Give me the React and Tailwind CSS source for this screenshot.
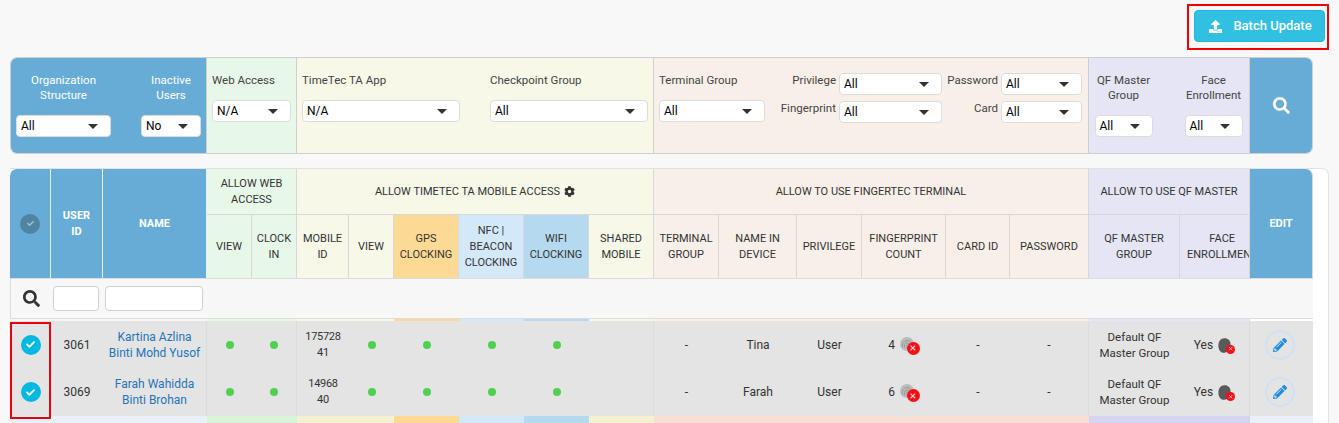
import React from "react";
import { FaSearch, FaCog, FaPencilAlt, FaUpload, FaCheck } from "react-icons/fa";

const GRID = "grid grid-cols-[41px_52px_104px_45px_45px_52px_45px_65px_65px_65px_65px_65px_78px_65px_84px_64px_79px_91px_70px_63px]";

function Select({ value, w, h = "h-[22px]" }) {
  return (
    <div className={`${w} ${h} flex items-center justify-between rounded-[4px] border border-[#dcdcdc] bg-white pl-[4px] pr-[12px] text-[12px] text-black shrink-0`}>
      <span>{value}</span>
      <span className="h-0 w-0 border-x-[5px] border-t-[5px] border-x-transparent border-t-[#333]" />
    </div>
  );
}

function LabelSelect({ label, value, w, gap = "mt-[12px]", lw = "" }) {
  return (
    <div className={`flex flex-col items-center ${w} ${lw}`}>
      <div className="h-[30px] whitespace-nowrap text-center leading-[15px]">{label}</div>
      <div className={gap}><Select value={value} w={w} /></div>
    </div>
  );
}

function Filters() {
  return (
    <div className="ml-[10px] flex h-[97px] w-[1303px] overflow-hidden rounded-[7px] border border-[#cfcfcf] text-[11.5px] text-[#444]">
      <div className="flex w-[196px] gap-[30px] border-r border-[#cfcfcf] bg-[#67acd6] pl-[5px] pt-[15px] text-white">
        <LabelSelect label={<>Organization<br />Structure</>} value="All" w="w-[95px]" />
        <LabelSelect label={<>Inactive<br />Users</>} value="No" w="w-[60px]" />
      </div>
      <div className="w-[90px] border-r border-[#cfcfcf] bg-[#e8f8e8] pl-[5px] pt-[15px]">
        <div className="h-[15px] leading-[15px]">Web Access</div>
        <div className="mt-[12px]"><Select value="N/A" w="w-[79px]" /></div>
      </div>
      <div className="flex w-[357px] gap-[30px] border-r border-[#cfcfcf] bg-[#f7f8e8] pl-[5px] pt-[15px]">
        <div>
          <div className="h-[15px] leading-[15px]">TimeTec TA App</div>
          <div className="mt-[12px]"><Select value="N/A" w="w-[158px]" /></div>
        </div>
        <div>
          <div className="h-[15px] leading-[15px]">Checkpoint Group</div>
          <div className="mt-[12px]"><Select value="All" w="w-[158px]" /></div>
        </div>
      </div>
      <div className="flex w-[435px] border-r border-[#cfcfcf] bg-[#f9efe9] pl-[5px]">
        <div className="w-[106px] pt-[15px]">
          <div className="h-[15px] leading-[15px]">Terminal Group</div>
          <div className="mt-[12px]"><Select value="All" w="w-[106px]" /></div>
        </div>
        <div className="flex w-[177px] flex-col items-end gap-[6px] pt-[15px]">
          <div className="flex gap-[3px]"><span className="leading-[15px]">Privilege</span><Select value="All" w="w-[103px]" /></div>
          <div className="flex gap-[3px]"><span className="leading-[15px]">Fingerprint</span><Select value="All" w="w-[103px]" /></div>
        </div>
        <div className="flex w-[140px] flex-col items-end gap-[6px] pt-[15px]">
          <div className="flex gap-[3px]"><span className="leading-[15px]">Password</span><Select value="All" w="w-[81px]" /></div>
          <div className="flex gap-[3px]"><span className="leading-[15px]">Card</span><Select value="All" w="w-[81px]" /></div>
        </div>
      </div>
      <div className="flex w-[161px] justify-center gap-[32px] border-r border-[#cfcfcf] bg-[#e5e5f5] pr-[1px] pt-[15px]">
        <LabelSelect label={<>QF Master<br />Group</>} value="All" w="w-[58px]" />
        <LabelSelect label={<>Face<br />Enrollment</>} value="All" w="w-[58px]" />
      </div>
      <div className="flex flex-1 items-center justify-center bg-[#67acd6] text-white">
        <FaSearch size={17} />
      </div>
    </div>
  );
}

function Head({ className = "", children }) {
  return (
    <div className={`flex items-center justify-center overflow-hidden border-r border-[#d8d8d8] text-center leading-[16px] ${className}`}>
      {children}
    </div>
  );
}

function TableHead() {
  const blue = "row-span-2 border-[#e8f1f8] bg-[#67acd6] font-bold text-white";
  const subs = [
    ["VIEW", "bg-[#e8f8e8]"],
    [<>CLOCK<br />IN</>, "bg-[#e8f8e8]"],
    [<>MOBILE<br />ID</>, "bg-[#f7f8e8]"],
    ["VIEW", "bg-[#f7f8e8]"],
    [<>GPS<br />CLOCKING</>, "bg-[#fdda94]"],
    [<>NFC |<br />BEACON<br />CLOCKING</>, "bg-[#d3e8f8]"],
    [<>WIFI<br />CLOCKING</>, "bg-[#b5d9ee]"],
    [<>SHARED<br />MOBILE</>, "bg-[#f7f8e8]"],
    [<>TERMINAL<br />GROUP</>, "bg-[#f9efe9]"],
    [<>NAME IN<br />DEVICE</>, "bg-[#f9efe9]"],
    ["PRIVILEGE", "bg-[#f9efe9]"],
    [<>FINGERPRINT<br />COUNT</>, "bg-[#f9efe9]"],
    ["CARD ID", "bg-[#f9efe9]"],
    ["PASSWORD", "bg-[#f9efe9]"],
    [<>QF MASTER<br />GROUP</>, "bg-[#e5e5f5]"],
  ];
  return (
    <div className={`${GRID} grid-rows-[46px_63px] border-b border-[#dddddd] text-[11px] text-[#333]`}>
      <Head className={`${blue} rounded-tl-[7px]`}>
        <span className="flex h-[20px] w-[20px] items-center justify-center rounded-full bg-[#4f84a3] text-[#9fc4da]"><FaCheck size={7} /></span>
      </Head>
      <Head className={blue}><span>USER<br />ID</span></Head>
      <Head className={blue}>NAME</Head>
      <Head className="col-span-2 border-b bg-[#e8f8e8]"><span>ALLOW WEB<br />ACCESS</span></Head>
      <Head className="col-span-6 gap-[4px] border-b bg-[#f7f8e8]">ALLOW TIMETEC TA MOBILE ACCESS <FaCog size={11} /></Head>
      <Head className="col-span-6 border-b bg-[#f9efe9]">ALLOW TO USE FINGERTEC TERMINAL</Head>
      <Head className="col-span-2 border-b bg-[#e5e5f5]">ALLOW TO USE QF MASTER</Head>
      <Head className="row-span-2 rounded-tr-[7px] bg-[#67acd6] font-bold text-white">EDIT</Head>
      {subs.map(([t, c], i) => (
        <Head key={i} className={c}><span>{t}</span></Head>
      ))}
      <Head className="justify-start bg-[#e5e5f5] pl-[7px]"><span className="block whitespace-nowrap text-center">FACE<br />ENROLLMENT</span></Head>
    </div>
  );
}

function SearchRow() {
  return (
    <div className="flex h-[40px] items-center border-b border-l border-[#dddddd] bg-[#f7f7f7] pb-[1px]">
      <div className="flex w-[42px] justify-center pr-[2px] text-[#333]"><FaSearch size={17} /></div>
      <div className="h-[25px] w-[46px] rounded-[4px] border border-[#cfcfcf] bg-white" />
      <div className="ml-[6px] h-[25px] w-[98px] rounded-[4px] border border-[#cfcfcf] bg-white" />
    </div>
  );
}

function Strip({ h, colors }) {
  return (
    <div className={`${GRID} ${h}`}>
      {colors.map((c, i) => <div key={i} className={c} />)}
    </div>
  );
}

const topStrip = ["bg-[#f7f7f7]", "bg-[#f7f7f7]", "bg-[#f7f7f7]", "bg-[#e8f8e8]", "bg-[#e8f8e8]", "bg-[#f7f8e8]", "bg-[#f7f8e8]", "bg-[#fdda94]", "bg-[#d3e8f8]", "bg-[#b5d9ee]", "bg-[#f7f8e8]", "bg-[#f9efe9]", "bg-[#f9efe9]", "bg-[#f9efe9]", "bg-[#f9efe9]", "bg-[#f9efe9]", "bg-[#f9efe9]", "bg-[#e5e5f5]", "bg-[#e5e5f5]", "bg-white"];
const endStrip = ["bg-[#e8f1f8]", "bg-[#e8f1f8]", "bg-[#e8f1f8]", "bg-[#d8f3d8]", "bg-[#d8f3d8]", "bg-[#f3f1d2]", "bg-[#f3f1d2]", "bg-[#fdd992]", "bg-[#d3e8f8]", "bg-[#b5d9ee]", "bg-[#f3f1d2]", "bg-[#f8dfd6]", "bg-[#f8dfd6]", "bg-[#f8dfd6]", "bg-[#f8dfd6]", "bg-[#f8dfd6]", "bg-[#f8dfd6]", "bg-[#d5d5ef]", "bg-[#d5d5ef]", "bg-[#e8f1f8]"];

function Dot() {
  return <span className="block h-[8px] w-[8px] rounded-full bg-[#4fd14f]" />;
}

function Cross({ className }) {
  return (
    <span className={`absolute flex items-center justify-center rounded-full bg-[#f40f14] ${className}`}>
      <svg viewBox="0 0 10 10" className="h-[60%] w-[60%]" fill="none" stroke="#ffd0d0" strokeWidth="1.5"><path d="M2 2l6 6M8 2l-6 6" /></svg>
    </span>
  );
}

function FingerIcon() {
  return (
    <span className="relative ml-[5px] h-[22px] w-[20px] shrink-0">
      <svg viewBox="0 0 16 16" className="absolute left-0 top-[3px] h-[14px] w-[14px]" fill="#bcbcbc" stroke="#8f8f8f" strokeWidth="0.9">
        <circle cx="8" cy="8" r="8" stroke="none" />
        <path d="M3 12c-1-4 1-8 5-8s6 3 5 8M5.500 13c-1-3 0-6.500 2.500-6.500s4 3 3 6.500M8 8.500v5" fill="none" />
      </svg>
      <Cross className="left-[7px] top-[8px] h-[13px] w-[13px]" />
    </span>
  );
}

function FaceIcon() {
  return (
    <span className="relative ml-[5px] h-[20px] w-[17px] shrink-0">
      <svg viewBox="0 0 16 18" className="absolute left-0 top-[2px] h-[17px] w-[13px]" fill="#5a5a5a">
        <path d="M8 0c4.500 0 7.500 3 7.500 7.500 0 2-1 3-1.500 4.500-.8 3.500-3.500 6-6.500 6C3.500 18 .5 14.500.5 9.500.5 4 3 0 8 0z" />
      </svg>
      <Cross className="left-[8px] top-[10px] h-[9px] w-[9px]" />
    </span>
  );
}

function Cell({ className = "", children }) {
  return <div className={`flex items-center justify-center text-center leading-[16px] ${className}`}>{children}</div>;
}

function Row({ h, id, name, mobile, device, count }) {
  const line = "border-r border-[#dcdcdc]";
  return (
    <div className={`${GRID} ${h} bg-[#e4e4e4] text-[12px] text-[#333]`}>
      <Cell>
        <span className="flex h-[20px] w-[20px] items-center justify-center rounded-full bg-[#00b8e0] text-white"><FaCheck size={9} /></span>
      </Cell>
      <Cell>{id}</Cell>
      <Cell className={`${line} text-[#1f75b8]`}><span>{name}</span></Cell>
      <Cell><Dot /></Cell>
      <Cell className={line}><Dot /></Cell>
      <Cell className="text-[11px] tracking-[-0.3px]"><span>{mobile}</span></Cell>
      <Cell><Dot /></Cell>
      <Cell><Dot /></Cell>
      <Cell><Dot /></Cell>
      <Cell><Dot /></Cell>
      <Cell className={line} />
      <Cell>-</Cell>
      <Cell>{device}</Cell>
      <Cell>User</Cell>
      <Cell>{count}<FingerIcon /></Cell>
      <Cell>-</Cell>
      <Cell className={line}>-</Cell>
      <Cell className="text-[11.5px]"><span>Default QF<br />Master Group</span></Cell>
      <Cell className={line}>Yes<FaceIcon /></Cell>
      <Cell className="pr-[3px]">
        <span className="flex h-[30px] w-[30px] items-center justify-center rounded-full border-2 border-[#d0e0f5] text-[#1c8ee0]"><FaPencilAlt size={14} /></span>
      </Cell>
    </div>
  );
}

export default function App() {
  return (
    <div className="relative h-[423px] w-[1339px] overflow-hidden bg-[#f8f8f8] [font-family:'Roboto',sans-serif]">
      <div className="flex h-[57px] justify-end pr-[10px] pt-[4px]">
        <div className="h-[46px] border-2 border-[#f00000] pl-[5px] pr-[2px] pt-[4px]">
          <button className="flex h-[32px] w-[131px] items-center justify-center gap-[11px] rounded-[4px] border border-[#1fb8dc] bg-[#31c0e2] pl-[2px] text-[13px] font-medium text-white">
            <FaUpload size={13} /> Batch Update
          </button>
        </div>
      </div>
      <Filters />
      <div className="ml-[10px] mt-[14px] w-[1319px] rounded-tr-[7px] border-r border-t border-[#e2e2e2] bg-white">
        <div className="w-[1303px]">
          <TableHead />
          <SearchRow />
          <Strip h="h-[2px]" colors={topStrip} />
          <Row h="h-[47px]" id="3061" name={<>Kartina Azlina<br />Binti Mohd Yusof</>} mobile={<>175728<br />41</>} device="Tina" count="4" />
          <Row h="h-[48px]" id="3069" name={<>Farah Wahidda<br />Binti Brohan</>} mobile={<>14968<br />40</>} device="Farah" count="6" />
          <Strip h="h-[8px]" colors={endStrip} />
        </div>
      </div>
      <div className="absolute left-[10px] top-[322px] h-[97px] w-[41px] border-2 border-[#e8000f]" />
    </div>
  );
}
